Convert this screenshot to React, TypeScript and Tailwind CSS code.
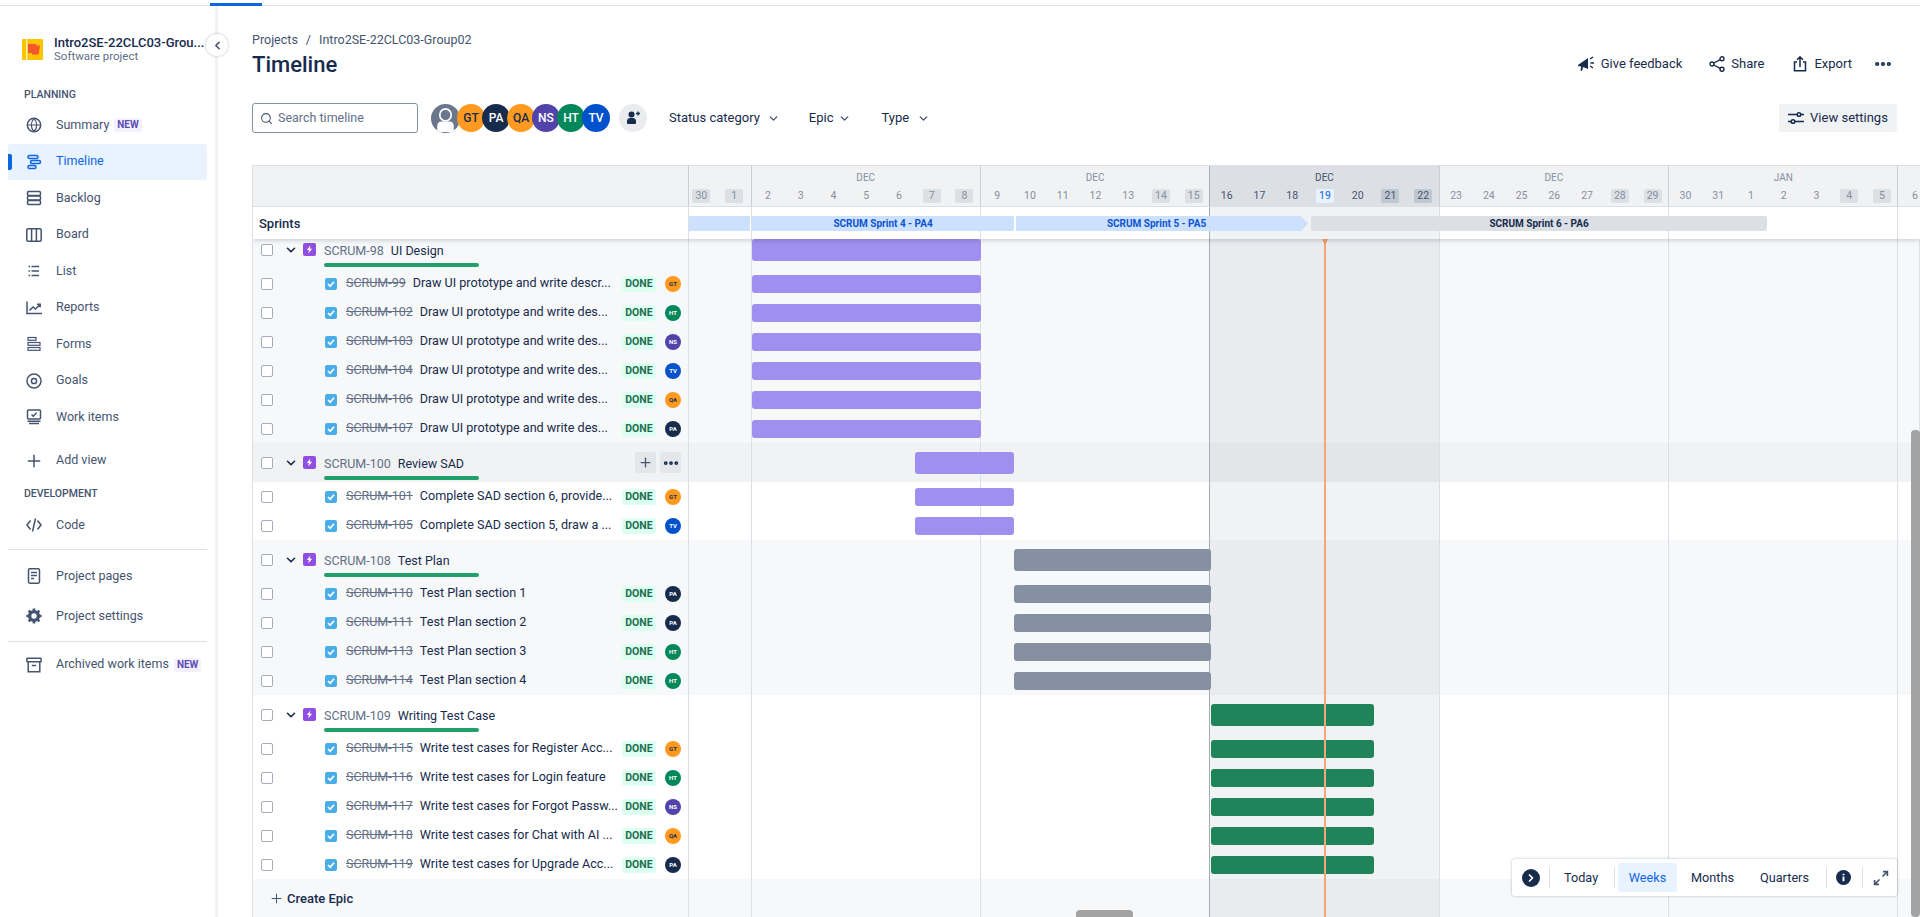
import type { ReactNode } from "react";
import { ChevronDown, ChevronLeft, ChevronRight, MoreHorizontal, Plus, Search } from "lucide-react";

type Child = { id: string; title: string; who: string };
type Epic = {
  id: string;
  title: string;
  rowBg: string;
  barPos: string;
  barColor: string;
  hovered?: boolean;
  items: Child[];
};

const people: Record<string, string> = {
  GT: "bg-[#ff991f] text-[#172b4d]",
  PA: "bg-[#172b4d] text-white",
  QA: "bg-[#ff991f] text-[#172b4d]",
  NS: "bg-[#5243aa] text-white",
  HT: "bg-[#00875a] text-white",
  TV: "bg-[#0052cc] text-white",
};

const epics: Epic[] = [
  {
    id: "SCRUM-98",
    title: "UI Design",
    rowBg: "bg-[#f7f8f9]",
    barPos: "left-[62.5px] w-[229.5px]",
    barColor: "bg-[#9f8fef]",
    items: [
      { id: "SCRUM-99", title: "Draw UI prototype and write descr...", who: "GT" },
      { id: "SCRUM-102", title: "Draw UI prototype and write des...", who: "HT" },
      { id: "SCRUM-103", title: "Draw UI prototype and write des...", who: "NS" },
      { id: "SCRUM-104", title: "Draw UI prototype and write des...", who: "TV" },
      { id: "SCRUM-106", title: "Draw UI prototype and write des...", who: "QA" },
      { id: "SCRUM-107", title: "Draw UI prototype and write des...", who: "PA" },
    ],
  },
  {
    id: "SCRUM-100",
    title: "Review SAD",
    rowBg: "bg-white",
    barPos: "left-[226px] w-[99px]",
    barColor: "bg-[#9f8fef]",
    hovered: true,
    items: [
      { id: "SCRUM-101", title: "Complete SAD section 6, provide...", who: "GT" },
      { id: "SCRUM-105", title: "Complete SAD section 5, draw a ...", who: "TV" },
    ],
  },
  {
    id: "SCRUM-108",
    title: "Test Plan",
    rowBg: "bg-[#f7f8f9]",
    barPos: "left-[325px] w-[196.5px]",
    barColor: "bg-[#8590a2]",
    items: [
      { id: "SCRUM-110", title: "Test Plan section 1", who: "PA" },
      { id: "SCRUM-111", title: "Test Plan section 2", who: "PA" },
      { id: "SCRUM-113", title: "Test Plan section 3", who: "HT" },
      { id: "SCRUM-114", title: "Test Plan section 4", who: "HT" },
    ],
  },
  {
    id: "SCRUM-109",
    title: "Writing Test Case",
    rowBg: "bg-white",
    barPos: "left-[521.5px] w-[163.5px]",
    barColor: "bg-[#1f845a]",
    items: [
      { id: "SCRUM-115", title: "Write test cases for Register Acc...", who: "GT" },
      { id: "SCRUM-116", title: "Write test cases for Login feature", who: "HT" },
      { id: "SCRUM-117", title: "Write test cases for Forgot Passw...", who: "NS" },
      { id: "SCRUM-118", title: "Write test cases for Chat with AI ...", who: "QA" },
      { id: "SCRUM-119", title: "Write test cases for Upgrade Acc...", who: "PA" },
    ],
  },
];

const weeks = [
  { month: "", days: ["30", "1"], offs: [0, 1] },
  { month: "DEC", days: ["2", "3", "4", "5", "6", "7", "8"], offs: [5, 6] },
  { month: "DEC", days: ["9", "10", "11", "12", "13", "14", "15"], offs: [5, 6] },
  { month: "DEC", days: ["16", "17", "18", "19", "20", "21", "22"], offs: [5, 6], current: true },
  { month: "DEC", days: ["23", "24", "25", "26", "27", "28", "29"], offs: [5, 6] },
  { month: "JAN", days: ["30", "31", "1", "2", "3", "4", "5"], offs: [5, 6] },
  { month: "", days: ["6"], offs: [] as number[] },
];

const chartCols = "grid grid-cols-[62.5px_229.4px_229.4px_229.4px_229.4px_229.4px_1fr]";

function Ico({ children, className = "text-[#44546f]" }: { children: ReactNode; className?: string }) {
  return (
    <svg viewBox="0 0 16 16" fill="none" stroke="currentColor" strokeWidth="1.5" className={`h-4 w-4 shrink-0 ${className}`}>
      {children}
    </svg>
  );
}

const navIcons: Record<string, ReactNode> = {
  Summary: (
    <>
      <circle cx="8" cy="8" r="6.7" />
      <path d="M1.5 8h13M8 1.3c-3.6 4-3.6 9.4 0 13.4M8 1.3c3.6 4 3.6 9.4 0 13.4" strokeWidth="1.2" />
    </>
  ),
  Timeline: (
    <>
      <rect x="2" y="1.5" width="10" height="3" rx="1.5" />
      <rect x="4.5" y="6.5" width="10" height="3" rx="1.5" />
      <rect x="2" y="11.5" width="8" height="3" rx="1.5" />
    </>
  ),
  Backlog: (
    <>
      <rect x="1.5" y="1.5" width="13" height="4" rx="1.2" />
      <rect x="1.5" y="6" width="13" height="4" rx="1.2" />
      <rect x="1.5" y="10.5" width="13" height="4" rx="1.2" />
    </>
  ),
  Board: (
    <>
      <rect x="0.8" y="1.8" width="14.4" height="12.4" rx="1.2" />
      <path d="M5.6 2v12M10.4 2v12" />
    </>
  ),
  List: <path d="M5.5 3.5H13M5.5 8H13M5.5 12.5H13M2.5 3.5h1.5M2.5 8h1.5M2.5 12.5h1.5" />,
  Reports: (
    <>
      <path d="M1 1.5V13.5H16" />
      <path d="M3.5 10.5 7 7l2.5 2L14 4.5M11 4.2h3.2v3" />
    </>
  ),
  Forms: (
    <>
      <rect x="2" y="1.5" width="8" height="2.8" strokeWidth="1.2" />
      <rect x="2" y="6.5" width="12" height="2.8" strokeWidth="1.2" />
      <rect x="2" y="11.5" width="12" height="2.8" strokeWidth="1.2" />
    </>
  ),
  Goals: (
    <>
      <circle cx="8" cy="8" r="7" />
      <circle cx="8" cy="8" r="2.6" />
    </>
  ),
  "Work items": (
    <>
      <rect x="1.5" y="1" width="13" height="9" rx="1" />
      <path d="M5.5 5.5 7.3 7.2 10.6 3.8M1.5 12.3h13M3 14.6h10" />
    </>
  ),
  "Add view": <path d="M8 1.8v12.4M1.8 8h12.4" />,
  Code: <path d="M4.5 3.5 1 8l3.5 4.5M11.5 3.5 15 8l-3.5 4.5M9.5 1.5 6.5 14.5" />,
  "Project pages": (
    <>
      <rect x="2.5" y="0.8" width="11" height="14.4" rx="1.4" />
      <path d="M5 4.5h6M5 7.5h6M5 10.5h3" />
    </>
  ),
  "Project settings": (
    <>
      <circle cx="8" cy="8" r="4.4" strokeWidth="3.4" />
      <path d="M8 .4v3M8 12.6v3M.4 8h3M12.6 8h3M2.6 2.6l2.1 2.1M11.3 11.3l2.1 2.1M2.6 13.4l2.1-2.1M11.3 4.7l2.1-2.1" strokeWidth="2.6" />
    </>
  ),
  "Archived work items": (
    <>
      <rect x="0.9" y="1.2" width="14.2" height="3.6" rx=".6" />
      <path d="M2.2 5v9.8h11.6V5M5.8 8.6h4.4" />
    </>
  ),
};

function NavItem({ label, active, badge }: { label: string; active?: boolean; badge?: boolean }) {
  return (
    <div
      className={`relative mx-2 flex h-[36.5px] items-center rounded-[3px] pl-[18px] text-[12.5px] ${
        active ? "bg-[#e9f2ff] text-[#0c66e4]" : "text-[#44546f]"
      }`}
    >
      {active ? <span className="absolute left-0 top-[10px] h-4 w-1 rounded-r-[2px] bg-[#0c66e4]" /> : null}
      <Ico className={active ? "text-[#0c66e4]" : "text-[#44546f]"}>{navIcons[label]}</Ico>
      <span className="ml-[14px] whitespace-nowrap">{label}</span>
      {badge ? (
        <span className="ml-[5px] rounded-[3px] bg-[#f3f0ff] px-[3px] text-[10px] font-bold leading-[14px] text-[#5e4db2]">NEW</span>
      ) : null}
    </div>
  );
}

function Sidebar() {
  return (
    <aside className="relative h-full w-[218px] shrink-0 border-r-[3px] border-[#f1f2f4]">
      <div className="ml-[22px] mt-[30px] flex items-center">
        <svg viewBox="0 0 21 21" className="h-[21px] w-[21px] shrink-0">
          <rect width="21" height="21" rx="1" fill="#ffc400" />
          <rect x="4" y="0" width="1.3" height="21" fill="#fff3c4" />
          <path d="M6 5h8v1.5h4l-1.5 9H10V14H6z" fill="#f4572c" />
        </svg>
        <div className="ml-[11px] whitespace-nowrap">
          <div className="text-[13px] font-medium leading-[14px] text-[#172b4d]">Intro2SE-22CLC03-Grou...</div>
          <div className="text-[11.5px] leading-[13px] text-[#626f86]">Software project</div>
        </div>
      </div>
      <button
        type="button"
        className="absolute left-[206px] top-[28px] z-10 flex h-[22px] w-[22px] items-center justify-center rounded-full bg-white text-[#44546f] shadow-[0_0_3px_rgba(9,30,66,0.3)]"
      >
        <ChevronLeft size={13} strokeWidth={3} />
      </button>

      <div className="ml-6 mt-[24px] text-[10.5px] font-medium leading-4 text-[#44546f]">PLANNING</div>
      <div className="mt-[4px]">
        <NavItem label="Summary" badge />
      </div>
      <NavItem label="Timeline" active />
      <NavItem label="Backlog" />
      <NavItem label="Board" />
      <NavItem label="List" />
      <NavItem label="Reports" />
      <NavItem label="Forms" />
      <NavItem label="Goals" />
      <NavItem label="Work items" />
      <div className="mt-[7px]">
        <NavItem label="Add view" />
      </div>
      <div className="ml-6 mt-[7px] text-[10.5px] font-medium leading-4 text-[#44546f]">DEVELOPMENT</div>
      <div className="mt-[5px]">
        <NavItem label="Code" />
      </div>
      <div className="mx-2 mt-[5px] h-px bg-[#dcdfe4]" />
      <div className="mt-[7px] flex h-[39px] flex-col justify-center">
        <NavItem label="Project pages" />
      </div>
      <div className="flex h-[41px] flex-col justify-center">
        <NavItem label="Project settings" />
      </div>
      <div className="mx-2 mt-[4px] h-px bg-[#dcdfe4]" />
      <div className="mt-[5px]">
        <NavItem label="Archived work items" badge />
      </div>
    </aside>
  );
}

function Avatar({ name, small }: { name: string; small?: boolean }) {
  return small ? (
    <span className={`flex h-4 w-4 shrink-0 items-center justify-center rounded-full text-[6px] font-bold ${people[name]}`}>{name}</span>
  ) : (
    <span className={`-ml-[3px] flex h-[28px] w-[28px] shrink-0 items-center justify-center rounded-full text-[12px] font-medium ${people[name]}`}>
      {name}
    </span>
  );
}

function FilterButton({ label, className, gap }: { label: string; className: string; gap: string }) {
  return (
    <div className={`flex items-center text-[13px] text-[#172b4d] ${className}`}>
      <span>{label}</span>
      <ChevronDown size={13} strokeWidth={2.6} className={`text-[#44546f] ${gap}`} />
    </div>
  );
}

function Toolbar() {
  return (
    <div className="flex h-full flex-col">
      <div className="flex items-start justify-between pr-[27px]">
        <div>
          <div className="mt-[26px] flex h-4 items-center text-[12.5px] text-[#44546f]">
            <span>Projects</span>
            <span className="mx-[8px]">/</span>
            <span>Intro2SE-22CLC03-Group02</span>
          </div>
          <h1 className="mt-[1px] text-[22px] font-medium leading-8 text-[#172b4d]">Timeline</h1>
        </div>
        <div className="mt-[47px] flex h-[22px] items-center text-[13px] text-[#172b4d]">
          <svg viewBox="0 0 18 18" className="h-[18px] w-[18px]" fill="#172b4d">
            <path d="M1 10 11 3v11L6 12l-1 4-1.6-.4.8-4.2L1 11z" />
            <path d="M13 4l3-2M13.5 8H17M13 11l3 2" stroke="#172b4d" strokeWidth="1.4" />
          </svg>
          <span className="ml-[6px]">Give feedback</span>
          <svg viewBox="0 0 16 16" className="ml-[27px] h-4 w-4" fill="none" stroke="#172b4d" strokeWidth="1.4">
            <circle cx="3" cy="8" r="2" />
            <circle cx="13" cy="2.8" r="2" />
            <circle cx="13" cy="13.2" r="2" />
            <path d="m4.8 7 6.4-3.4M4.8 9l6.4 3.4" />
          </svg>
          <span className="ml-[6px]">Share</span>
          <svg viewBox="0 0 16 16" className="ml-[28px] h-4 w-4" fill="none" stroke="#172b4d" strokeWidth="1.5">
            <path d="M5 6H2.5v8.8h11V6H11M8 11V1M5 3.8 8 .9l3 2.9" />
          </svg>
          <span className="ml-[6px]">Export</span>
          <MoreHorizontal size={20} strokeWidth={3} className="ml-[21px] text-[#172b4d]" />
        </div>
      </div>

      <div className="mt-[22px] flex h-[30px] items-center pr-[23px]">
        <div className="flex h-[30px] w-[166px] items-center rounded-[3px] border border-[#8590a2] pl-[7px] text-[12.5px] text-[#626f86]">
          <Search size={13} strokeWidth={2} className="text-[#44546f]" />
          <span className="ml-[5px]">Search timeline</span>
        </div>
        <div className="ml-[13px] flex items-center">
          <span className="flex h-[29px] w-[29px] shrink-0 items-center justify-center overflow-hidden rounded-full bg-[#6b778c]">
            <svg viewBox="0 0 28 28" className="h-full w-full" fill="#fff">
              <ellipse cx="14" cy="10.5" rx="5.5" ry="5.8" fill="none" stroke="#fff" strokeWidth="1.6" />
              <path d="M6 27v-6c0-2.5 2-4 4-4h8c2 0 4 1.5 4 4v6z" />
            </svg>
          </span>
          <Avatar name="GT" />
          <Avatar name="PA" />
          <Avatar name="QA" />
          <Avatar name="NS" />
          <Avatar name="HT" />
          <Avatar name="TV" />
        </div>
        <span className="ml-[9px] flex h-[28px] w-[28px] items-center justify-center rounded-full bg-[#e9ebee]">
          <svg viewBox="0 0 16 16" className="h-4 w-4" fill="#172b4d">
            <circle cx="6.5" cy="4.5" r="3" />
            <path d="M2 13v-2c0-1.6 1.3-3 3-3h3c1.7 0 3 1.4 3 3v2a1 1 0 0 1-1 1H3a1 1 0 0 1-1-1z" />
            <path d="M11 3.5h4M13 1.5v4" stroke="#172b4d" strokeWidth="1.3" />
          </svg>
        </span>
        <FilterButton label="Status category" className="ml-[22px]" gap="ml-[7px]" />
        <FilterButton label="Epic" className="ml-[29px]" gap="ml-[5px]" />
        <FilterButton label="Type" className="ml-[30px]" gap="ml-[8px]" />
        <div className="ml-auto flex h-[28px] w-[118px] items-center justify-center rounded-[3px] bg-[#f1f2f4] text-[13px] text-[#172b4d]">
          <svg viewBox="0 0 16 16" className="h-4 w-4" fill="none" stroke="#172b4d" strokeWidth="1.5">
            <path d="M0 4.5h9M13 4.5h3M0 11.5h3M7 11.5h9" />
            <circle cx="11" cy="4.5" r="1.8" />
            <circle cx="5" cy="11.5" r="1.8" />
          </svg>
          <span className="ml-[6px]">View settings</span>
        </div>
      </div>

      <Gantt />
    </div>
  );
}

function ChartHeader() {
  return (
    <div className={`${chartCols} h-full`}>
      {weeks.map((w, i) => (
        <div
          key={i}
          className={`flex flex-col overflow-hidden border-r last:border-r-0 ${i === 2 ? "border-[#a5adba]" : "border-[#c9ced6]"} ${
            w.current ? "bg-[#dcdfe4]" : ""
          }`}
        >
          <div className={`mt-[4px] h-4 text-center text-[10px] leading-4 ${w.current ? "text-[#44546f]" : "text-[#8590a2]"}`}>{w.month}</div>
          <div className={`mt-[3px] flex text-[10.5px] leading-[14px] ${i === 0 ? "justify-end" : ""}`}>
            {w.days.map((d, j) => {
              const off = w.offs.includes(j);
              const today = d === "19";
              return (
                <span key={d} className="flex w-[32.76px] shrink-0 justify-center">
                  <span
                    className={`w-[18px] rounded-[2px] text-center ${
                      today
                        ? "bg-[#e9f2ff] text-[#0c66e4]"
                        : off
                          ? w.current
                            ? "bg-[#c1c7d0] text-[#44546f]"
                            : "bg-[#dcdfe4] text-[#8590a2]"
                          : w.current
                            ? "text-[#44546f]"
                            : "text-[#8590a2]"
                    }`}
                  >
                    {d}
                  </span>
                </span>
              );
            })}
          </div>
        </div>
      ))}
    </div>
  );
}

function ChartRow({ bar, barColor, height }: { bar?: string; barColor?: string; height?: string }) {
  return (
    <div className={`${chartCols} relative h-full`}>
      {weeks.map((w, i) => (
        <div
          key={i}
          className={`border-r last:border-r-0 ${i === 2 ? "border-[#a5adba]" : "border-[#dcdfe4]"} ${w.current ? "bg-[#091e420f]" : ""}`}
        />
      ))}
      {bar ? <div className={`absolute top-1/2 -translate-y-1/2 rounded-[3px] ${bar} ${barColor} ${height}`} /> : null}
    </div>
  );
}

function Checkbox() {
  return <span className="h-3 w-3 shrink-0 rounded-[2px] border-[1.5px] border-[#a5adba] bg-white" />;
}

function EpicRow({ epic }: { epic: Epic }) {
  return (
    <div className={`flex h-[39px] ${epic.hovered ? "bg-[#f1f2f4]" : epic.rowBg}`}>
      <div className="relative flex w-[436px] shrink-0 items-center border-r border-[#dcdfe4] pl-[8px]">
        <Checkbox />
        <ChevronDown size={14} strokeWidth={2.8} className="ml-[11px] text-[#172b4d]" />
        <span className="ml-[5px] flex h-[13px] w-[13px] items-center justify-center rounded-[2px] bg-[#904ee2]">
          <svg viewBox="0 0 10 10" className="h-[9px] w-[9px]" fill="#fff">
            <path d="M6 .5 2 5.6h2.4L3.6 9.5 8 4.2H5.4z" />
          </svg>
        </span>
        <div className="ml-[8px] self-start pt-[11px]">
          <div className="h-[20px] whitespace-nowrap text-[12.5px] leading-[20px] text-[#172b4d]">
            <span className="text-[#626f86]">{epic.id}</span>
            <span className="ml-[7px]">{epic.title}</span>
          </div>
          <div className="mt-[2px] h-[4px] w-[155px] rounded-full bg-[#22a06b]" />
        </div>
        {epic.hovered ? (
          <div className="absolute right-[7px] top-[9px] flex gap-[4px] text-[#44546f]">
            <span className="flex h-[21px] w-[21px] items-center justify-center rounded-[3px] bg-[#e4e6ea]">
              <Plus size={15} strokeWidth={2} />
            </span>
            <span className="flex h-[21px] w-[21px] items-center justify-center rounded-[3px] bg-[#e4e6ea] text-[#172b4d]">
              <MoreHorizontal size={18} strokeWidth={3} />
            </span>
          </div>
        ) : null}
      </div>
      <div className="min-w-0 flex-1">
        <ChartRow bar={epic.barPos} barColor={epic.barColor} height="h-[22px]" />
      </div>
    </div>
  );
}

function ChildRow({ item, epic }: { item: Child; epic: Epic }) {
  return (
    <div className={`flex h-[29px] ${epic.rowBg}`}>
      <div className="flex w-[436px] shrink-0 items-center border-r border-[#dcdfe4] pl-[8px] pr-[7px]">
        <Checkbox />
        <span className="ml-[52px] flex h-3 w-3 shrink-0 items-center justify-center rounded-[2px] bg-[#4bade8]">
          <svg viewBox="0 0 12 12" className="h-3 w-3" fill="none" stroke="#fff" strokeWidth="1.7">
            <path d="m3 6 2.2 2.2L9 3.8" />
          </svg>
        </span>
        <span className="ml-[9px] whitespace-nowrap text-[12.5px] text-[#626f86] line-through">{item.id}</span>
        <span className="ml-[7px] min-w-0 flex-1 whitespace-nowrap text-[12.6px] text-[#172b4d]">{item.title}</span>
        <span className="ml-[4px] w-[34px] shrink-0 rounded-[3px] bg-[#dcfff1] text-center text-[10.5px] font-bold leading-[16px] text-[#216e4e]">DONE</span>
        <span className="ml-[9px] shrink-0">
          <Avatar name={item.who} small />
        </span>
      </div>
      <div className="min-w-0 flex-1">
        <ChartRow bar={epic.barPos} barColor={epic.barColor} height="h-[18px]" />
      </div>
    </div>
  );
}

function Gantt() {
  return (
    <div className="relative mt-[32px] min-h-0 flex-1 overflow-hidden border-l border-[#dcdfe4]">
      <div className="flex h-[42px] border-y border-[#dcdfe4] bg-[#f1f2f4]">
        <div className="w-[436px] shrink-0 border-r border-[#c9ced6]" />
        <div className="min-w-0 flex-1">
          <ChartHeader />
        </div>
      </div>

      <div className="relative z-10 flex h-[32px] bg-white shadow-[0_3px_4px_-1px_rgba(9,30,66,0.16)]">
        <div className="flex w-[436px] shrink-0 items-center border-r border-[#dcdfe4] pl-[6px] pt-[1px] text-[13px] font-medium text-[#172b4d]">Sprints</div>
        <div className="relative min-w-0 flex-1">
          <ChartRow />
          <div className="absolute inset-x-0 top-[9px] flex h-[15px] text-[10px] font-bold leading-[15px]">
            <div className="w-[61px] bg-[#cce0ff]" />
            <div className="ml-[2px] w-[262px] rounded-r-[2px] bg-[#cce0ff] text-center text-[#0c55cf]">SCRUM Sprint 4 - PA4</div>
            <div className="ml-[2px] w-[292px] bg-[#cce0ff] pr-[11px] text-center text-[#0c55cf] [clip-path:polygon(0_0,calc(100%-7px)_0,100%_50%,calc(100%-7px)_100%,0_100%)]">
              SCRUM Sprint 5 - PA5
            </div>
            <div className="ml-[3px] w-[456px] rounded-[2px] bg-[#dcdfe4] text-center text-[#172b4d]">SCRUM Sprint 6 - PA6</div>
          </div>
        </div>
      </div>

      <div className="h-[678px] overflow-hidden">
        <div className="-mt-[9px]">
          {epics.map((epic) => (
            <div key={epic.id}>
              <EpicRow epic={epic} />
              {epic.items.map((item) => (
                <ChildRow key={item.id} item={item} epic={epic} />
              ))}
            </div>
          ))}
          <div className="flex h-[38px] bg-[#f7f8f9]">
            <div className="flex w-[436px] shrink-0 items-center border-r border-[#dcdfe4] pl-[16px] pt-[1px] text-[13px] font-medium text-[#172b4d]">
              <Plus size={15} strokeWidth={1.6} className="text-[#44546f]" />
              <span className="ml-[3px]">Create Epic</span>
            </div>
            <div className="min-w-0 flex-1">
              <ChartRow />
            </div>
          </div>
        </div>
      </div>

      {/* today marker sits over the rows and bars */}
      <div className="absolute left-[1071px] top-[74px] z-20 h-[678px] w-[2px] bg-[#f2a878]" />
      <div className="absolute left-[1068.5px] top-[74px] z-20 h-0 w-0 border-x-[3.5px] border-t-[6px] border-x-transparent border-t-[#e8935a]" />

      <ZoomBar />
    </div>
  );
}

function ZoomBar() {
  return (
    <div className="absolute left-[1259px] top-[694px] z-30 flex h-[37px] w-[385px] items-center rounded-[3px] bg-white text-[12.7px] text-[#172b4d] shadow-[0_0_3px_rgba(9,30,66,0.3)]">
      <span className="ml-[10px] flex h-[18px] w-[18px] items-center justify-center rounded-full bg-[#172b4d] text-white">
        <ChevronRight size={12} strokeWidth={3.5} />
      </span>
      <span className="ml-[9px] h-[21px] w-px bg-[#dcdfe4]" />
      <span className="ml-[14px] w-[35px]">Today</span>
      <span className="ml-[15px] h-[21px] w-px bg-[#dcdfe4]" />
      <span className="ml-[3px] flex h-[29px] w-[59px] items-center justify-center rounded-[3px] bg-[#e9f2ff] text-[#0c66e4]">Weeks</span>
      <span className="ml-[14px] w-[45px]">Months</span>
      <span className="ml-[24px] w-[52px]">Quarters</span>
      <span className="ml-[14px] h-[21px] w-px bg-[#dcdfe4]" />
      <svg viewBox="0 0 16 16" className="ml-[9px] h-[15px] w-[15px]">
        <circle cx="8" cy="8" r="8" fill="#172b4d" />
        <path d="M8 7v5M8 4v1.6" stroke="#fff" strokeWidth="2" />
      </svg>
      <span className="ml-[11px] h-[21px] w-px bg-[#dcdfe4]" />
      <svg viewBox="0 0 16 16" className="ml-[10px] h-4 w-4" fill="none" stroke="#44546f" strokeWidth="1.6">
        <path d="M9.5 6.5 14 2M10 1.6h4.4V6M6.5 9.5 2 14M6 14.4H1.6V10" />
      </svg>
    </div>
  );
}

export default function App() {
  return (
    <div className="relative flex h-[917px] w-[1920px] flex-col overflow-hidden bg-white font-['Roboto','Liberation_Sans',sans-serif]">
      <div className="h-[6px] shrink-0 border-b border-[#dcdfe4]">
        <div className="ml-[210px] mt-[3px] h-[3px] w-[52px] bg-[#0c66e4]" />
      </div>
      <div className="flex min-h-0 flex-1">
        <Sidebar />
        <main className="min-w-0 flex-1 pl-[34px]">
          <Toolbar />
        </main>
      </div>
      {/* browser scrollbars */}
      <div className="absolute bottom-0 right-0 z-40 h-[487px] w-[9px] rounded-[4px] bg-[#a3a3a3]" />
      <div className="absolute bottom-0 left-[1076px] z-40 h-[7px] w-[57px] rounded-t-[4px] bg-[#a3a3a3]" />
    </div>
  );
}
